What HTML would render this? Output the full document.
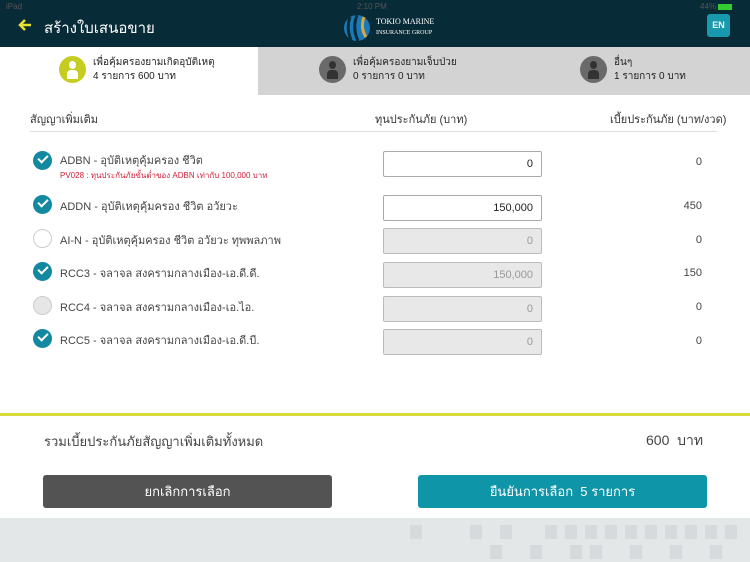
<!DOCTYPE html>
<html><head><meta charset="utf-8"><style>
*{margin:0;padding:0;box-sizing:border-box}
body{width:750px;height:562px;overflow:hidden;background:#fff;font-family:"Liberation Sans",sans-serif;position:relative;color:#333}
.a{position:absolute}
.hdr{left:0;top:0;width:750px;height:47px;background:#082b38}
.tab{top:47px;height:48px;background:#d3d3d3}
.ic{width:27px;height:27px;border-radius:50%;top:56px;overflow:hidden}
.ic:before{content:"";position:absolute;left:10px;top:5px;width:7px;height:8px;border-radius:50%;background:#333}
.ic:after{content:"";position:absolute;left:8px;top:14px;width:11px;height:9px;border-radius:4px 4px 0 0;background:#333}
.y:before,.y:after{background:#fff}
.tt{font-size:10px;color:#222;line-height:14px}
.chk{left:33px;width:19px;height:19px;border-radius:50%;background:#1289a0}
.chk:after{content:"";position:absolute;left:5px;top:4px;width:8px;height:4px;border-left:2.5px solid #fff;border-bottom:2.5px solid #fff;transform:rotate(-45deg)}
.unc{left:33px;width:19px;height:19px;border-radius:50%;border:1px solid #ccc;background:#fff}
.lb{left:60px;font-size:11px;color:#444}
.in{left:383px;width:159px;height:26px;border:1px solid #bbb;border-radius:2px;font-size:11px;text-align:right;padding-right:8px;line-height:24px}
.en{background:#fff;color:#222;border-color:#aaa}
.dis{background:#e8e8e8;color:#999}
.pr{right:48px;font-size:11px;color:#444}
</style></head><body>
<div class="a hdr"></div>
<div class="a" style="left:6px;top:2px;font-size:8px;color:#555">iPad</div>
<div class="a" style="left:357px;top:2px;font-size:8px;color:#555">2:10 PM</div>
<div class="a" style="left:700px;top:2px;font-size:8px;color:#555">44% <span style="display:inline-block;width:14px;height:6px;background:#3c3;vertical-align:middle"></span></div>
<svg class="a" style="left:18px;top:19px" width="14" height="12" viewBox="0 0 14 12"><path d="M7 1 L2 6 L7 11 M2 6 H13" stroke="#e8e230" stroke-width="2.5" fill="none"/></svg>
<div class="a" style="left:44px;top:16px;color:#fff;font-size:15px">สร้างใบเสนอขาย</div>
<svg class="a" style="left:342px;top:13px" width="30" height="30" viewBox="0 0 30 30"><circle cx="15" cy="15" r="13" fill="#1a7ab8"/><path d="M8 4 Q4 15 9 27" stroke="#082b38" stroke-width="3" fill="none"/><path d="M15 2 Q10 15 16 28" stroke="#082b38" stroke-width="3" fill="none"/><path d="M22 4 Q18 15 24 24" stroke="#d9a640" stroke-width="3" fill="none"/></svg>
<div class="a" style="left:376px;top:17px;color:#fff;font-size:8px;line-height:10px;font-family:'Liberation Serif',serif">TOKIO MARINE<br><span style="font-size:6px">INSURANCE GROUP</span></div>
<div class="a" style="left:707px;top:14px;width:23px;height:23px;background:#1899ae;border-radius:3px;color:#fff;font-size:9px;font-weight:bold;text-align:center;line-height:23px">EN</div>
<div class="a tab" style="left:0;width:258px;background:#fff"></div>
<div class="a tab" style="left:258px;width:492px"></div>
<div class="a ic y" style="left:59px;background:#c6cd20"></div>
<div class="a tt" style="left:93px;top:56px">เพื่อคุ้มครองยามเกิดอุบัติเหตุ<br>4 รายการ 600 บาท</div>
<div class="a ic" style="left:319px;background:#6a6a6a"></div>
<div class="a tt" style="left:353px;top:56px">เพื่อคุ้มครองยามเจ็บป่วย<br>0 รายการ 0 บาท</div>
<div class="a ic" style="left:580px;background:#6a6a6a"></div>
<div class="a tt" style="left:614px;top:56px">อื่นๆ<br>1 รายการ 0 บาท</div>
<div class="a" style="left:30px;top:110px;font-size:11px;color:#333">สัญญาเพิ่มเติม</div>
<div class="a" style="left:375px;top:110px;font-size:11px;color:#333">ทุนประกันภัย (บาท)</div>
<div class="a" style="left:610px;top:110px;font-size:11px;color:#333">เบี้ยประกันภัย (บาท/งวด)</div>
<div class="a" style="left:30px;top:131px;width:687px;height:1px;background:#ddd"></div>

<div class="a chk" style="top:151px"></div><div class="a lb" style="top:151px">ADBN - อุบัติเหตุคุ้มครอง ชีวิต</div>
<div class="a" style="left:60px;top:169px;font-size:8px;color:#d0203a">PV028 : ทุนประกันภัยขั้นต่ำของ ADBN เท่ากับ 100,000 บาท</div>
<div class="a in en" style="top:151px">0</div><div class="a pr" style="top:156px">0</div>

<div class="a chk" style="top:195px"></div><div class="a lb" style="top:197px">ADDN - อุบัติเหตุคุ้มครอง ชีวิต อวัยวะ</div>
<div class="a in en" style="top:195px">150,000</div><div class="a pr" style="top:200px">450</div>

<div class="a unc" style="top:229px"></div><div class="a lb" style="top:231px">AI-N - อุบัติเหตุคุ้มครอง ชีวิต อวัยวะ ทุพพลภาพ</div>
<div class="a in dis" style="top:228px">0</div><div class="a pr" style="top:234px">0</div>

<div class="a chk" style="top:262px"></div><div class="a lb" style="top:264px">RCC3 - จลาจล สงครามกลางเมือง-เอ.ดี.ดี.</div>
<div class="a in dis" style="top:262px">150,000</div><div class="a pr" style="top:267px">150</div>

<div class="a unc" style="top:296px;background:#e6e6e6"></div><div class="a lb" style="top:298px">RCC4 - จลาจล สงครามกลางเมือง-เอ.ไอ.</div>
<div class="a in dis" style="top:296px">0</div><div class="a pr" style="top:301px">0</div>

<div class="a chk" style="top:329px"></div><div class="a lb" style="top:331px">RCC5 - จลาจล สงครามกลางเมือง-เอ.ดี.บี.</div>
<div class="a in dis" style="top:329px">0</div><div class="a pr" style="top:335px">0</div>

<div class="a" style="left:0;top:413px;width:750px;height:3px;background:#d8db3a"></div>
<div class="a" style="left:44px;top:431px;font-size:13px;color:#444">รวมเบี้ยประกันภัยสัญญาเพิ่มเติมทั้งหมด</div>
<div class="a" style="left:646px;top:430px;font-size:14px;color:#444">600&nbsp; บาท</div>
<div class="a" style="left:43px;top:475px;width:289px;height:33px;background:#535353;border-radius:3px;color:#fff;font-size:13px;text-align:center;line-height:33px">ยกเลิกการเลือก</div>
<div class="a" style="left:418px;top:475px;width:289px;height:33px;background:#0f95a8;border-radius:3px;color:#fff;font-size:13px;text-align:center;line-height:33px">ยืนยันการเลือก&nbsp; 5 รายการ</div>
<div class="a" style="left:0;top:518px;width:750px;height:44px;background:#e4e7e8"></div>
<svg class="a" style="left:380px;top:520px" width="370" height="42"><g fill="#d6dadc"><rect x="30" y="5" width="12" height="14"/><rect x="90" y="5" width="12" height="14"/><rect x="120" y="5" width="12" height="14"/><rect x="165" y="5" width="12" height="14"/><rect x="185" y="5" width="12" height="14"/><rect x="205" y="5" width="12" height="14"/><rect x="225" y="5" width="12" height="14"/><rect x="245" y="5" width="12" height="14"/><rect x="265" y="5" width="12" height="14"/><rect x="285" y="5" width="12" height="14"/><rect x="305" y="5" width="12" height="14"/><rect x="325" y="5" width="12" height="14"/><rect x="345" y="5" width="12" height="14"/><rect x="110" y="25" width="12" height="14"/><rect x="150" y="25" width="12" height="14"/><rect x="190" y="25" width="12" height="14"/><rect x="210" y="25" width="12" height="14"/><rect x="250" y="25" width="12" height="14"/><rect x="290" y="25" width="12" height="14"/><rect x="330" y="25" width="12" height="14"/></g></svg>
</body></html>
